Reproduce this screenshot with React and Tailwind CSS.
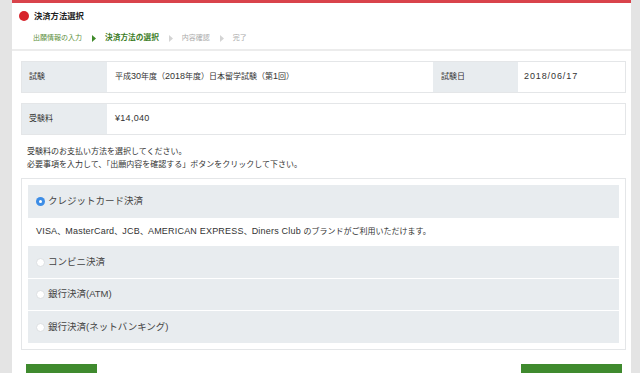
import React from "react";

const font = { fontFamily: '"Liberation Sans", "Noto Sans CJK JP", sans-serif' };

function Radio({ checked }) {
  if (checked) {
    return (
      <span className="flex h-[9px] w-[9px] items-center justify-center rounded-full bg-[#3d8de6]">
        <span className="h-[3px] w-[3px] rounded-full bg-white" />
      </span>
    );
  }
  return <span className="h-[9px] w-[9px] rounded-full border border-[#dcdfe2] bg-white" />;
}

function Option({ label, checked, h = "h-[32px]" }) {
  return (
    <div className={`flex ${h} items-center gap-[3px] bg-[#e8ecef] pl-[8px] text-[9.5px] text-[#444]`}>
      <Radio checked={checked} />
      <span>{label}</span>
    </div>
  );
}

function Arrow({ color }) {
  return (
    <svg width="5" height="7" viewBox="0 0 5 7" className="ml-[10px] mr-[8px]">
      <polygon points="0,0 4,3.5 0,7" fill={color} />
    </svg>
  );
}

export default function App() {
  return (
    <div className="flex h-[373px] w-[640px] overflow-hidden bg-[#e4e4e4]" style={font}>
      <div className="w-[12px] shrink-0" />
      <div className="w-[619px] shrink-0 border-t-[3px] border-[#d9434b] bg-white">
        <div className="flex h-[26px] items-center pl-[7px]">
          <span className="h-[10px] w-[10px] rounded-full bg-[#d7232b]" />
          <span className="ml-[5px] text-[8.3px] font-bold text-[#222]">決済方法選択</span>
        </div>
        <div className="flex h-[18px] items-center pl-[21px] text-[7px]">
          <span className="text-[#5d8f3c]">出願情報の入力</span>
          <Arrow color="#3f8a2a" />
          <span className="text-[7.7px] font-bold text-[#3d7d27]">決済方法の選択</span>
          <Arrow color="#d4d4d4" />
          <span className="text-[#aaa]">内容確認</span>
          <Arrow color="#d4d4d4" />
          <span className="text-[#aaa]">完了</span>
        </div>
        <div className="mt-[2px] h-[2px] bg-[#ececec]" />
        <div className="pl-[9px] pr-[5px] pt-[10px] text-[#333]">
          <div className="flex h-[32px] border border-[#e4e6e8] text-[8px]">
            <div className="flex w-[85px] items-center bg-[#e8ecef] pl-[7px]">試験</div>
            <div className="flex w-[326px] items-center pl-[8px]">
              <span>
                平成<span className="text-[9px]">30</span>年度（<span className="text-[9px]">2018</span>年度）日本留学試験（第<span className="text-[9px]">1</span>回）
              </span>
            </div>
            <div className="flex w-[85px] items-center bg-[#e8ecef] pl-[8px]">試験日</div>
            <div className="flex flex-1 items-center pl-[6px] text-[9px] tracking-[0.9px]">2018/06/17</div>
          </div>
          <div className="mt-[10px] flex h-[32px] border border-[#e4e6e8] text-[8px]">
            <div className="flex w-[85px] items-center bg-[#e8ecef] pl-[7px]">受験料</div>
            <div className="flex flex-1 items-center pl-[8px] text-[9px] tracking-[0.3px]">¥14,040</div>
          </div>
          <div className="mt-[10px] pl-[6px] text-[8px] leading-[13px]">
            <p>受験料のお支払い方法を選択してください。</p>
            <p>必要事項を入力して、「出願内容を確認する」ボタンをクリックして下さい。</p>
          </div>
          <div className="mt-[7px] border border-[#e4e6e8] p-[6px]">
            <Option label="クレジットカード決済" checked h="h-[33px]" />
            <div className="flex h-[28px] items-center pl-[8px] text-[8px]">
              <span>
                <span className="text-[9px] tracking-[0.2px]">VISA</span>、<span className="text-[9px] tracking-[0.2px]">MasterCard</span>、<span className="text-[9px] tracking-[0.2px]">JCB</span>、<span className="text-[9px] tracking-[0.2px]">AMERICAN EXPRESS</span>、<span className="text-[9px] tracking-[0.2px]">Diners Club </span>のブランドがご利用いただけます。
              </span>
            </div>
            <div className="flex flex-col gap-px">
              <Option label="コンビニ決済" />
              <Option label="銀行決済(ATM)" h="h-[31px]" />
              <Option label="銀行決済(ネットバンキング)" />
            </div>
          </div>
          <div className="mt-[14px] flex justify-between pl-[5px] pr-[4px]">
            <div className="h-[20px] w-[71px] bg-[#3f8a2e]" />
            <div className="h-[20px] w-[101px] bg-[#3f8a2e]" />
          </div>
        </div>
      </div>
      <div className="flex-1" />
    </div>
  );
}
